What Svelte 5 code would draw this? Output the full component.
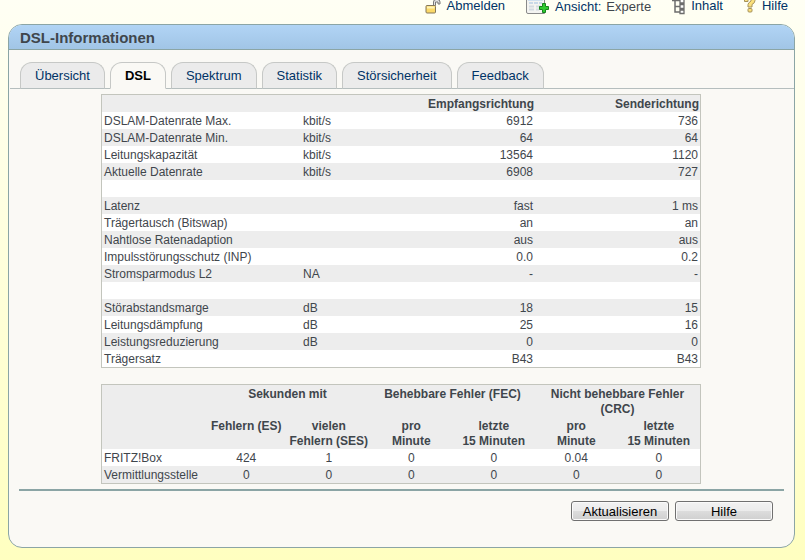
<script lang="ts">
	interface Rate {
		name: string;
		unit?: string;
		down?: string;
		up?: string;
	}

	const tabs = ['Übersicht', 'DSL', 'Spektrum', 'Statistik', 'Störsicherheit', 'Feedback'];
	let active = $state('DSL');

	const rates: Rate[] = [
		{ name: 'DSLAM-Datenrate Max.', unit: 'kbit/s', down: '6912', up: '736' },
		{ name: 'DSLAM-Datenrate Min.', unit: 'kbit/s', down: '64', up: '64' },
		{ name: 'Leitungskapazität', unit: 'kbit/s', down: '13564', up: '1120' },
		{ name: 'Aktuelle Datenrate', unit: 'kbit/s', down: '6908', up: '727' },
		{ name: '' },
		{ name: 'Latenz', down: 'fast', up: '1 ms' },
		{ name: 'Trägertausch (Bitswap)', down: 'an', up: 'an' },
		{ name: 'Nahtlose Ratenadaption', down: 'aus', up: 'aus' },
		{ name: 'Impulsstörungsschutz (INP)', down: '0.0', up: '0.2' },
		{ name: 'Stromsparmodus L2', unit: 'NA', down: '-', up: '-' },
		{ name: '' },
		{ name: 'Störabstandsmarge', unit: 'dB', down: '18', up: '15' },
		{ name: 'Leitungsdämpfung', unit: 'dB', down: '25', up: '16' },
		{ name: 'Leistungsreduzierung', unit: 'dB', down: '0', up: '0' },
		{ name: 'Trägersatz', down: 'B43', up: 'B43' }
	];

	const errors = [
		{ name: 'FRITZ!Box', values: ['424', '1', '0', '0', '0.04', '0'] },
		{ name: 'Vermittlungsstelle', values: ['0', '0', '0', '0', '0', '0'] }
	];
</script>

<nav class="meta">
	<a href="#abmelden">
		<svg width="16" height="14" viewBox="0 0 16 14">
			<path d="M8.500 5.500V2Q8.500-.5 11-.5h1.500Q15-.5 15 2v2h-2V2h-2.500v3.500z" fill="#e4e4e4" stroke="#777" />
			<rect x="1" y="5.500" width="9.500" height="7.500" rx="1" fill="#fbd968" stroke="#85775a" />
			<path d="M2 7.500h7.500" stroke="#fff3b8" stroke-width="2" />
		</svg>
		<span>Abmelden</span>
	</a>
	<div class="view">
		<a href="#ansicht">
			<svg width="23" height="15" viewBox="0 0 23 15">
				<path d="M.5-1v13q0 1.500 1.500 1.500h16.500V-1z" fill="#f4f4f1" stroke="#8a8a8a" />
				<path d="M2 .5h15" stroke="#cfe0f0" />
				<path d="M3 3h13" stroke="#9fbfe0" stroke-dasharray="4 1" />
				<path d="M3 6.500h5m2 0h5M3 9.500h5m2 0h3" stroke="#d4dbe2" stroke-width="2" />
				<path d="M16.500 3.500h3v3h3v3h-3v3h-3v-3h-3v-3h3z" fill="#2fca2f" stroke="#16831d" />
			</svg>
			<span>Ansicht:</span>
		</a>
		<span>Experte</span>
	</div>
	<a href="#inhalt">
		<svg width="13" height="15" viewBox="0 0 13 15">
			<path d="M3 0v12H8M3 6.500H8M0 .5h8" fill="none" stroke="#6d6d6d" stroke-width="1.500" />
			<path d="M8-1.500h4v4.500h-4zM8 4.500h4v4h-4zM8 10h4v3.500h-4z" fill="#fff" stroke="#6d6d6d" stroke-width="1.300" />
		</svg>
		<span>Inhalt</span>
	</a>
	<a href="#hilfe">
		<svg width="12" height="14" viewBox="0 0 12 14">
			<path d="M.5-1v2.500h3.500V-1zM7-1h4v1.500Q11 3 8 4.500V7H4V4.500Q4 3 7 1z" fill="#fbe07a" stroke="#a5915a" />
			<rect x="4" y="8.500" width="4" height="3.500" rx="1" fill="#fbe07a" stroke="#a5915a" />
		</svg>
		<span>Hilfe</span>
	</a>
</nav>

<main class="panel">
	<h1>DSL-Informationen</h1>

	<div class="tabs" role="tablist">
		{#each tabs as tab (tab)}
			<button
				type="button"
				role="tab"
				class="tab"
				class:active={tab === active}
				aria-selected={tab === active}
				onclick={() => (active = tab)}
			>{tab}</button>
		{/each}
	</div>

	<div class="content">
		<table class="rates">
			<colgroup>
				<col class="name" />
				<col class="unit" />
				<col class="down" />
				<col class="up" />
			</colgroup>
			<thead>
				<tr>
					<th></th>
					<th></th>
					<th>Empfangsrichtung</th>
					<th>Senderichtung</th>
				</tr>
			</thead>
			<tbody>
				{#each rates as rate}
					<tr>
						<td>{rate.name}</td>
						<td>{rate.unit ?? ''}</td>
						<td class="value">{rate.down ?? ''}</td>
						<td class="value">{rate.up ?? ''}</td>
					</tr>
				{/each}
			</tbody>
		</table>

		<table class="errors">
			<colgroup>
				<col class="source" />
				<col span="6" />
			</colgroup>
			<thead>
				<tr>
					<th></th>
					<th colspan="2">Sekunden mit</th>
					<th colspan="2">Behebbare Fehler (FEC)</th>
					<th colspan="2">Nicht behebbare Fehler (CRC)</th>
				</tr>
				<tr>
					<th></th>
					<th>Fehlern (ES)</th>
					<th>vielen<br />Fehlern (SES)</th>
					<th>pro<br />Minute</th>
					<th>letzte<br />15 Minuten</th>
					<th>pro<br />Minute</th>
					<th>letzte<br />15 Minuten</th>
				</tr>
			</thead>
			<tbody>
				{#each errors as row}
					<tr>
						<td>{row.name}</td>
						{#each row.values as value}
							<td class="count">{value}</td>
						{/each}
					</tr>
				{/each}
			</tbody>
		</table>
	</div>

	<div class="actions">
		<button type="button">Aktualisieren</button>
		<button type="button">Hilfe</button>
	</div>
</main>

<style>
	:global(html) {
		min-height: 100%;
		background: linear-gradient(#fffff4, #ffffc0);
	}

	:global(body) {
		margin: 0;
		font-family: "Liberation Sans", Arial, sans-serif;
		font-size: 12px;
		color: #3f464c;
	}

	.meta {
		display: flex;
		justify-content: flex-end;
		gap: 21px;
		height: 24px;
		padding-right: 17px;
		font-size: 13px;
		line-height: 12px;
	}

	.meta a {
		display: flex;
		gap: 6px;
		color: #003366;
		text-decoration: none;
	}

	.view {
		display: flex;
		gap: 5px;
		line-height: 14px;
	}

	.panel {
		margin: 0 10px 12px 8px;
		border: 1px solid #8ba5a5;
		border-radius: 14px;
		background: #faf9f5;
		overflow: hidden;
	}

	h1 {
		margin: 0;
		padding: 2px 11px 0;
		border-bottom: 1px solid #8ba5a5;
		background: linear-gradient(#b1d4f5, #a1c5e6);
		font-size: 15px;
		line-height: 22px;
	}

	.tabs {
		display: flex;
		gap: 5px;
		margin: 12px 0 5px 1px;
		padding-left: 10px;
		border-bottom: 1px solid #b5bebe;
	}

	.tab {
		height: 27px;
		margin-bottom: -1px;
		padding: 0 14px;
		border: 1px solid #c6c8c6;
		border-bottom-color: #b5bebe;
		border-radius: 12px 12px 0 0;
		background: #ebebeb;
		font: 13px "Liberation Sans", Arial, sans-serif;
		color: #003366;
	}

	.tab.active {
		border-bottom-color: #faf9f5;
		background: #faf9f5;
		font-weight: bold;
		color: #000;
	}

	.content {
		display: flex;
		flex-direction: column;
		align-items: center;
		gap: 16px;
		margin: 0 10px;
		padding: 0 1px 5px 0;
		border-bottom: 2px solid #8ba5a5;
	}

	table {
		width: 100%;
		max-width: 600px;
		border: 1px solid #c3c5bd;
		border-spacing: 0;
		table-layout: fixed;
		line-height: 15px;
		background: #fff;
	}

	th,
	td {
		height: 15px;
		padding: 2px 2px 0;
		text-align: left;
	}

	.rates th {
		padding-right: 1px;
		text-align: right;
	}

	.value {
		text-align: right;
	}

	.rates thead tr,
	.rates tbody tr:nth-child(even),
	.errors thead tr,
	.errors tbody tr:nth-child(even) {
		background: #ededed;
	}

	.name {
		width: 199px;
	}

	.unit {
		width: 69px;
	}

	.up {
		width: 165px;
	}

	.source {
		width: 103px;
	}

	.errors th,
	.count {
		padding: 2px 0 0;
		text-align: center;
		vertical-align: top;
	}

	.actions {
		display: flex;
		justify-content: flex-end;
		gap: 6px;
		padding: 10px 21px 26px;
	}

	.actions button {
		width: 98px;
		height: 20px;
		padding: 0;
		border: 1px solid #707070;
		border-radius: 3px;
		background: linear-gradient(#f2f2f2, #ebebeb 50%, #dddddd 50%, #cfcfcf);
		box-shadow: inset 0 0 0 1px #fafafa;
		font: 13px "Liberation Sans", Arial, sans-serif;
		color: #000;
	}
</style>
